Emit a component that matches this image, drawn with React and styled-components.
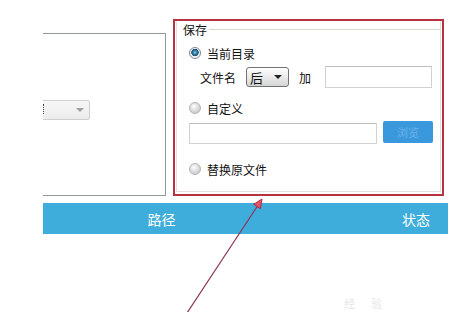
import React from "react";
import styled, { createGlobalStyle } from "styled-components";

const Global = createGlobalStyle`
  html, body { margin: 0; padding: 0; background: #fff; }
  body { font-family: "Noto Sans CJK SC", "Noto Sans", sans-serif; }
`;

const Page = styled.div`
  position: relative;
  width: 466px;
  height: 312px;
  overflow: hidden;
  background: #fff;
  padding: 19px 0 0 43px;
  box-sizing: border-box;
`;

const TopRow = styled.div`
  display: flex;
  align-items: flex-end;
  height: 177px;
`;

const LeftPanel = styled.div`
  box-sizing: border-box;
  width: 123px;
  height: 163px;
  border-top: 1px solid #8f9c93;
  border-right: 1px solid #8f9c93;
  border-bottom: 1px solid #8f9c93;
  padding-top: 66px;
`;

const Combo = styled.div`
  position: relative;
  box-sizing: border-box;
  width: 47px;
  height: 20px;
  border: 1px solid #cfcfcf;
  border-left: none;
  border-radius: 0 3px 3px 0;
  background: linear-gradient(#f7f7f7, #ececec);
  display: flex;
  align-items: center;
  justify-content: flex-end;
  padding-right: 5px;
  &::before {
    content: "";
    position: absolute;
    left: 0;
    top: 3px;
    height: 10px;
    border-left: 1px dotted #444;
  }
`;

const SmallArrow = styled.span`
  width: 0;
  height: 0;
  border-left: 4px solid transparent;
  border-right: 4px solid transparent;
  border-top: 4px solid ${(p) => p.$color || "#a0a0a0"};
`;

const RedBox = styled.div`
  box-sizing: border-box;
  margin-left: 7px;
  width: 271px;
  height: 177px;
  border: 2px solid #b7323f;
  padding: 0 1px 2px 1px;
  display: flex;
  flex-direction: column;
`;

const Group = styled.div`
  flex: 1;
  border: 1px solid #e6dede;
  border-top: none;
  display: flex;
  flex-direction: column;
  padding-left: 12px;
`;

const GroupHeader = styled.div`
  display: flex;
  align-items: center;
  height: 16px;
  margin-left: -6px;
  font-size: 12px;
  color: #111;
  gap: 2px;
`;

const HeaderLine = styled.div`
  flex: 1;
  height: 1px;
  background: #d8d8cc;
`;

const Row = styled.div`
  display: flex;
  align-items: center;
  height: ${(p) => p.$h || 16}px;
  margin-top: ${(p) => p.$mt || 0}px;
  padding-left: ${(p) => p.$pl || 0}px;
  font-size: 12px;
  color: #111;
  white-space: nowrap;
`;

const Radio = styled.span`
  box-sizing: border-box;
  width: 12px;
  height: 12px;
  border-radius: 50%;
  margin-right: 6px;
  border: 1px solid ${(p) => (p.$checked ? "#7b8896" : "#b4b4b4")};
  background: ${(p) =>
    p.$checked
      ? "radial-gradient(circle at 50% 45%, #9fd6f0 0, #3b86b0 1.6px, #1b4f70 3.4px, #e8eef2 4px, #f4f4f4 5px)"
      : "radial-gradient(circle at 40% 35%, #ffffff 0, #eeeeee 2px, #cfcfcf 6px)"};
`;

const Label = styled.span``;

const SelectBox = styled.div`
  box-sizing: border-box;
  width: 43px;
  height: 20px;
  border: 1px solid #737373;
  border-radius: 3px;
  background: linear-gradient(#ffffff, #e6e6e6 60%, #d6d6d6);
  display: flex;
  align-items: center;
  justify-content: space-between;
  padding: 0 6px 0 3px;
  margin-left: 10px;
  margin-right: 10px;
  font-size: 13px;
`;

const TextInput = styled.div`
  box-sizing: border-box;
  width: ${(p) => p.$w}px;
  height: ${(p) => p.$h || 22}px;
  margin-left: ${(p) => p.$ml || 0}px;
  margin-top: ${(p) => p.$mt || 0}px;
  border: 1px solid #d2d2d2;
  border-top-color: #bdbdbd;
  background: #fff;
`;

const BlueButton = styled.div`
  box-sizing: border-box;
  width: 50px;
  height: 22px;
  margin-left: 6px;
  margin-top: -1px;
  border-radius: 2px;
  background: #3a98dc;
  color: #6cb4ea;
  font-size: 11px;
  display: flex;
  align-items: center;
  justify-content: center;
  align-self: flex-start;
`;

const HeaderBar = styled.div`
  margin-top: 7px;
  width: 405px;
  height: 31px;
  background: #3eaddb;
  display: grid;
  grid-template-columns: 237px 1fr;
  align-items: center;
  color: #fff;
  font-size: 14px;
`;

const HeaderCell = styled.div`
  text-align: ${(p) => p.$align || "center"};
  padding-right: ${(p) => p.$pr || 0}px;
`;

const Annotation = styled.svg`
  position: absolute;
  left: 0;
  top: 0;
  pointer-events: none;
`;

const Watermark = styled.div`
  position: absolute;
  left: 344px;
  top: 297px;
  font-size: 11px;
  line-height: 13px;
  color: #e6e6e6;
  display: flex;
  gap: 16px;
`;

export default function App() {
  return (
    <>
      <Global />
      <Page>
        <TopRow>
          <LeftPanel>
            <Combo>
              <SmallArrow />
            </Combo>
          </LeftPanel>
          <RedBox>
            <Group>
              <GroupHeader>
                <span>保存</span>
                <HeaderLine />
              </GroupHeader>
              <Row $mt={8}>
                <Radio $checked />
                <Label>当前目录</Label>
              </Row>
              <Row $mt={5} $h={22} $pl={11}>
                <Label>文件名</Label>
                <SelectBox>
                  <span>后</span>
                  <SmallArrow $color="#222" />
                </SelectBox>
                <Label>加</Label>
                <TextInput $w={107} $ml={14} />
              </Row>
              <Row $mt={12}>
                <Radio />
                <Label>自定义</Label>
              </Row>
              <Row $mt={6} $h={22}>
                <TextInput $w={188} $h={21} $mt={1} />
                <BlueButton>浏览</BlueButton>
              </Row>
              <Row $mt={17}>
                <Radio />
                <Label>替换原文件</Label>
              </Row>
            </Group>
          </RedBox>
        </TopRow>
        <HeaderBar>
          <HeaderCell>路径</HeaderCell>
          <HeaderCell $align="right" $pr={18}>状态</HeaderCell>
        </HeaderBar>
        <Annotation width="466" height="312" viewBox="0 0 466 312">
          <line x1="187" y1="313" x2="257.5" y2="206" stroke="#8c3454" strokeWidth="1.2" />
          <polygon points="262,199 253.7,204.3 260.3,208.7" fill="#e05468" stroke="#b42a40" strokeWidth="1" />
        </Annotation>
        <Watermark>
          <span>经</span>
          <span>验</span>
        </Watermark>
      </Page>
    </>
  );
}
